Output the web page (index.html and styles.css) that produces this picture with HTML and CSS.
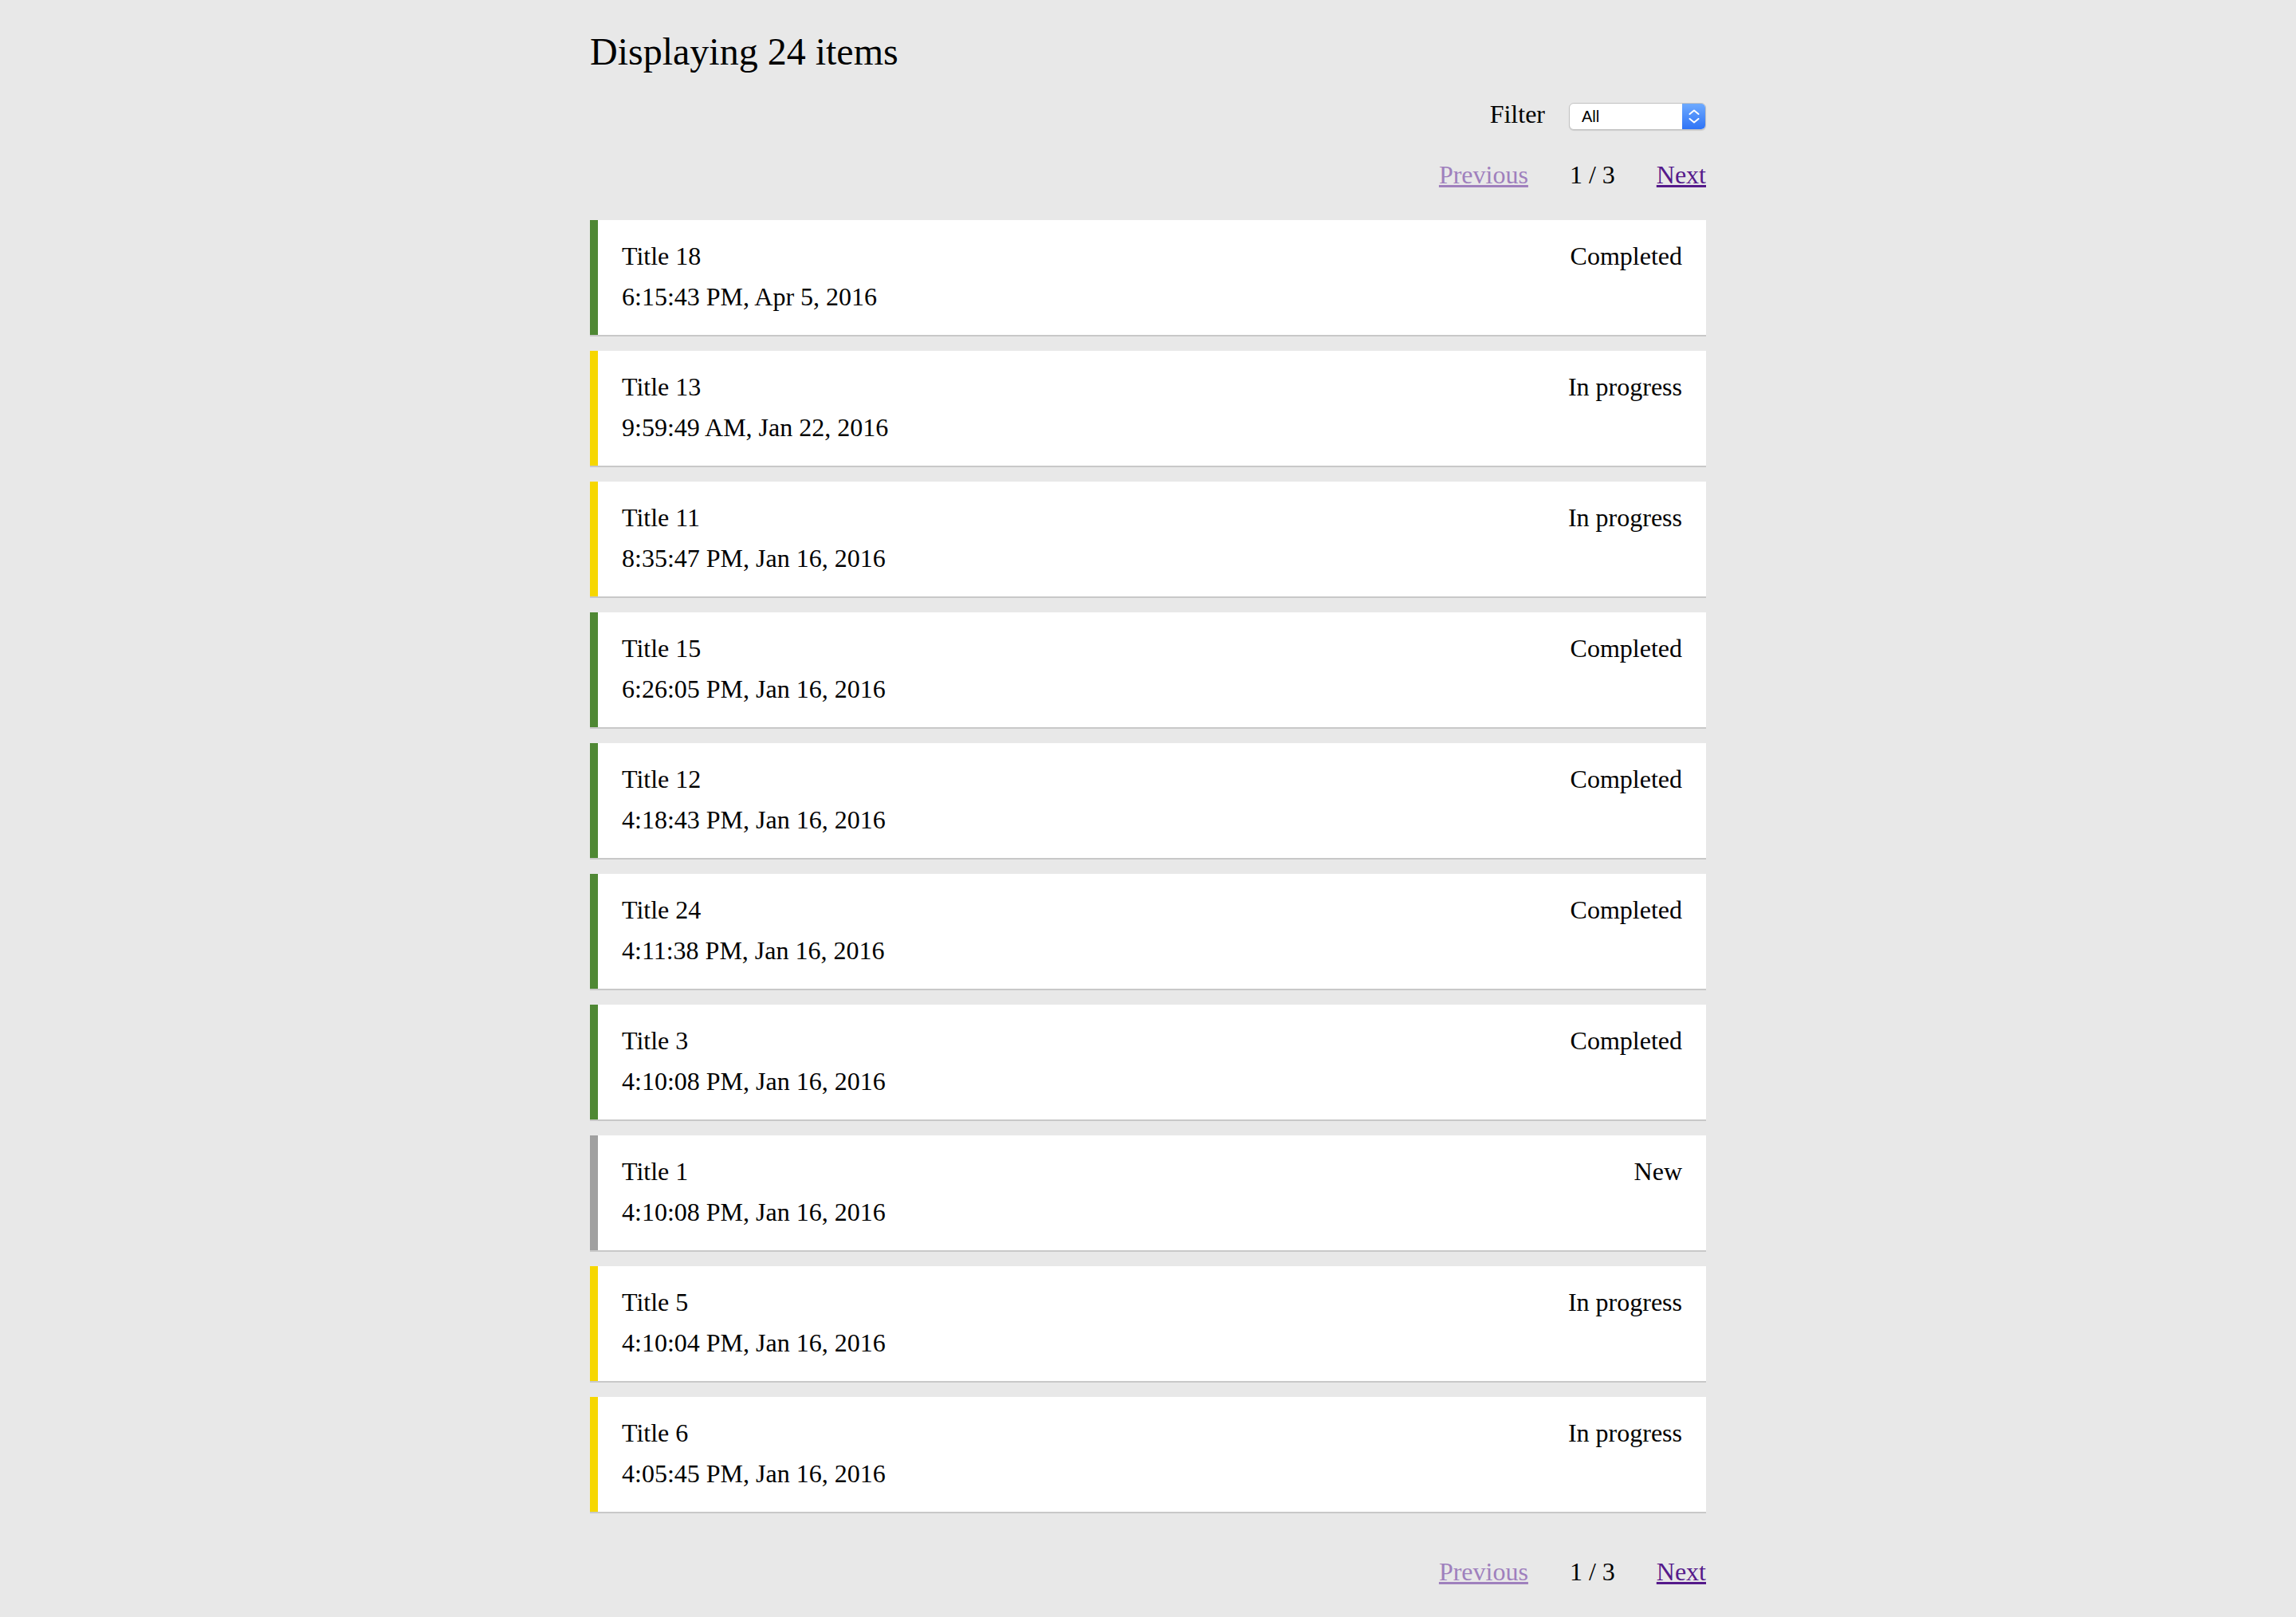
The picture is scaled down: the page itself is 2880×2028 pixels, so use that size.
FILE: index.html
```html
<!DOCTYPE html>
<html lang="en">
<head>
<meta charset="utf-8">
<title>Items</title>
<link rel="stylesheet" href="styles.css">
</head>
<body>
<main class="page">
  <h2 class="heading">Displaying 24 items</h2>

  <div class="filter-row">
    <span class="filter-label">Filter</span>
    <div class="select">
      <span class="select-value">All</span>
      <span class="select-btn">
        <svg width="14" height="18" viewBox="0 0 14 18" aria-hidden="true">
          <path d="M1.5 6 L7 1.5 L12.5 6" fill="none" stroke="#fff" stroke-width="2" stroke-linecap="round" stroke-linejoin="round"/>
          <path d="M1.5 12 L7 16.5 L12.5 12" fill="none" stroke="#fff" stroke-width="2" stroke-linecap="round" stroke-linejoin="round"/>
        </svg>
      </span>
    </div>
  </div>

  <nav class="pager pager-top">
    <a class="pager-link disabled" href="#">Previous</a>
    <span class="pager-count">1 / 3</span>
    <a class="pager-link" href="#">Next</a>
  </nav>

  <ul class="cards">
    <li class="card done"><div class="card-row"><span>Title 18</span><span>Completed</span></div><div class="card-date">6:15:43 PM, Apr 5, 2016</div></li>
    <li class="card progress"><div class="card-row"><span>Title 13</span><span>In progress</span></div><div class="card-date">9:59:49 AM, Jan 22, 2016</div></li>
    <li class="card progress"><div class="card-row"><span>Title 11</span><span>In progress</span></div><div class="card-date">8:35:47 PM, Jan 16, 2016</div></li>
    <li class="card done"><div class="card-row"><span>Title 15</span><span>Completed</span></div><div class="card-date">6:26:05 PM, Jan 16, 2016</div></li>
    <li class="card done"><div class="card-row"><span>Title 12</span><span>Completed</span></div><div class="card-date">4:18:43 PM, Jan 16, 2016</div></li>
    <li class="card done"><div class="card-row"><span>Title 24</span><span>Completed</span></div><div class="card-date">4:11:38 PM, Jan 16, 2016</div></li>
    <li class="card done"><div class="card-row"><span>Title 3</span><span>Completed</span></div><div class="card-date">4:10:08 PM, Jan 16, 2016</div></li>
    <li class="card new"><div class="card-row"><span>Title 1</span><span>New</span></div><div class="card-date">4:10:08 PM, Jan 16, 2016</div></li>
    <li class="card progress"><div class="card-row"><span>Title 5</span><span>In progress</span></div><div class="card-date">4:10:04 PM, Jan 16, 2016</div></li>
    <li class="card progress"><div class="card-row"><span>Title 6</span><span>In progress</span></div><div class="card-date">4:05:45 PM, Jan 16, 2016</div></li>
  </ul>

  <nav class="pager pager-bottom">
    <a class="pager-link disabled" href="#">Previous</a>
    <span class="pager-count">1 / 3</span>
    <a class="pager-link" href="#">Next</a>
  </nav>
</main>
</body>
</html>
```

FILE: styles.css
```css
html, body {
  margin: 0;
  padding: 0;
  background: #e8e8e8;
}

body {
  font-family: "Liberation Serif", "Times New Roman", serif;
  font-size: 32px;
  color: #000;
}

.page {
  width: 1400px;
  margin: 0 auto;
}

.heading {
  margin: 37px 0 0 0;
  font-size: 48px;
  font-weight: normal;
  line-height: 56px;
}

.filter-row {
  margin-top: 32px;
  display: flex;
  justify-content: flex-end;
  align-items: flex-start;
  gap: 30px;
  line-height: 36px;
}

.select {
  margin-top: 4px;
  width: 172px;
  height: 34px;
  box-sizing: border-box;
  display: flex;
  align-items: stretch;
  background: #fff;
  border: 1px solid #c2c2c2;
  border-radius: 6px;
  box-shadow: 0 1px 1px rgba(0, 0, 0, 0.12);
  overflow: hidden;
}

.select-value {
  flex: 1;
  padding-left: 15px;
  font-family: "Liberation Sans", Arial, sans-serif;
  font-size: 20px;
  line-height: 32px;
}

.select-btn {
  width: 29px;
  display: flex;
  align-items: center;
  justify-content: center;
  background: linear-gradient(#6eaaff, #2f74f6);
}

.pager {
  display: flex;
  justify-content: flex-end;
  align-items: baseline;
  gap: 52px;
  line-height: 36px;
}

.pager-top {
  margin-top: 38px;
}

.pager-bottom {
  margin-top: 57px;
}

.pager-link {
  color: #551a8b;
  text-decoration: underline;
}

.pager-link.disabled {
  color: #9f80bd;
}

.cards {
  list-style: none;
  margin: 39px 0 0 0;
  padding: 0;
  display: flex;
  flex-direction: column;
  gap: 20px;
}

.card {
  background: #fff;
  border-left: 10px solid #a0a0a0;
  padding: 27px 30px 30px 30px;
  box-shadow: 0 2px 0 #c8c8c8;
  line-height: 36px;
}

.card.done {
  border-left-color: #4f8834;
}

.card.progress {
  border-left-color: #f6d700;
}

.card.new {
  border-left-color: #a0a0a0;
}

.card-row {
  display: flex;
  justify-content: space-between;
  margin-bottom: 15px;
}
```
